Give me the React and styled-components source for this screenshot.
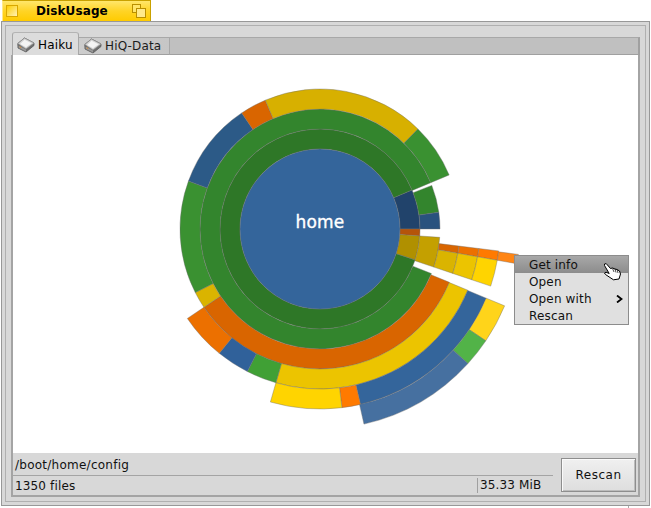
import React from "react";
import styled, { createGlobalStyle } from "styled-components";

const Global = createGlobalStyle`
  html, body { margin: 0; padding: 0; background: #fff; }
  body { font-family: "DejaVu Sans", sans-serif; font-size: 12px; color: #000; letter-spacing: 0.15px; }
`;

const Page = styled.div`
  width: 651px; height: 508px; background: #fff; overflow: hidden;
  display: flex; flex-direction: column;
`;
const TitleTab = styled.div`
  width: 149px; height: 21px; margin-left: 2px; box-sizing: border-box;
  display: flex; align-items: center; padding: 0 4px 0 3px;
  background: linear-gradient(#ffe66b, #ffd426 50%, #ffcb00);
  border: 1px solid #c9a100; border-bottom: 0; border-left-color: #ffe98a;
`;
const CloseBox = styled.span`
  width: 12px; height: 12px; box-sizing: border-box; display: block;
  border: 1px solid #d9a800; background: linear-gradient(135deg, #ffcf00, #fff2b8);
`;
const Title = styled.span`
  flex: 1; font-weight: bold; font-size: 12px; letter-spacing: 0.1px; padding-left: 18px;
`;
const ZoomBox = styled.svg`
  width: 14px; height: 14px; display: block;
`;
const Outer = styled.div`
  position: relative; margin: 0 1px; height: 485px; box-sizing: border-box; padding: 3px;
  background: #d8d8d8; border: 1px solid #989898;
  &::after {
    content: ""; position: absolute; right: 20px; bottom: -3px; width: 1px; height: 2px; background: #a8a8a8;
  }
`;
const Frame = styled.div`
  height: 100%; box-sizing: border-box; padding: 6px 5px 4px;
  border: 1px solid #b0b0b0; display: flex; flex-direction: column;
`;
const Strip = styled.div`
  height: 23px; display: flex; align-items: flex-end; flex: none;
`;
const ActiveTab = styled.div`
  width: 67px; height: 23px; margin-left: 1px; box-sizing: border-box; flex: none;
  display: flex; align-items: center; gap: 3px; padding: 1px 0 0 4px;
  background: #dcdcdc; border: 1px solid #a8a8a8; border-bottom: 0; border-radius: 3px 3px 0 0;
  border-top-color: #b4b4b4;
`;
const Tab = styled.div`
  width: 91px; height: 18px; box-sizing: border-box; flex: none;
  display: flex; align-items: center; gap: 3px; padding-left: 5px; color: #1c1c1c;
  background: linear-gradient(90deg, #cdcdcd, #c6c6c6);
  border-top: 1px solid #a8a8a8; border-right: 1px solid #a8a8a8; border-bottom: 1px solid #a0a0a0;
`;
const TabFiller = styled.div`
  flex: 1; height: 18px; box-sizing: border-box; background: #c0c0c0;
  border-top: 1px solid #a8a8a8; border-right: 2px solid #a0a0a0; border-bottom: 1px solid #a0a0a0;
`;
const DiskIcon = styled.svg`
  width: 18px; height: 16px; flex: none; display: block;
`;
const Body = styled.div`
  position: relative; height: 398px; flex: none; background: #fff;
  border-left: 2px solid #a4a4a4; border-right: 2px solid #a4a4a4;
`;
const Chart = styled.svg`
  display: block; width: 625px; height: 398px;
`;
const ChartLabel = styled.text`
  font-family: "DejaVu Sans", sans-serif; font-size: 17px; fill: #fff; stroke: #fff; stroke-width: 0.35px;
  text-anchor: middle;
`;
const Menu = styled.div`
  position: absolute; left: 501px; top: 200px; width: 115px; height: 70px; box-sizing: border-box;
  background: #e0e0e0; border: 1px solid #8c8c8c;
  display: flex; flex-direction: column;
`;
const MenuItem = styled.div`
  height: 17px; flex: none; display: flex; align-items: center; justify-content: space-between;
  padding: 0 5px 0 14px; color: #111;
  ${p => p.$active && "background: linear-gradient(#a8a8a8, #8c8c8c);"}
`;
const Chevron = styled.svg`
  width: 7px; height: 8px; display: block;
`;
const Hand = styled.svg`
  position: absolute; left: 590px; top: 208px; width: 19px; height: 18px;
`;
const Footer = styled.div`
  height: 42px; flex: none; display: flex; align-items: flex-start;
  border: 2px solid #a4a4a4; border-width: 0 2px 2px; background: #d8d8d8;
`;
const Status = styled.div`
  width: 540px; flex: none; display: flex; flex-direction: column;
`;
const PathRow = styled.div`
  display: flex; align-items: center; padding: 1px 0 0 2px; letter-spacing: 0.25px;
  height: 21px; border-bottom: 1px solid #a4a4a4; color: #111;
`;
const InfoRow = styled.div`
  height: 19px; display: flex; align-items: center; justify-content: space-between; color: #111;
  padding-left: 2px;
`;
const Size = styled.div`
  width: 76px; height: 15px; box-sizing: border-box; border-left: 1px solid #a0a0a0;
  padding-left: 2px; line-height: 15px;
`;
const Button = styled.button`
  width: 75px; height: 34px; margin: 5px 0 0 8px; flex: none; box-sizing: border-box; padding: 0;
  font: 12px "DejaVu Sans", sans-serif; color: #111; letter-spacing: 0.5px;
  border: 1px solid #8e8e8e; outline: 0;
  background: linear-gradient(#f0f0f0, #dedede);
  box-shadow: inset 1px 1px 0 #fafafa, inset -1px -1px 0 #bcbcbc;
`;

const CX = 307, CY = 174;
const pt = (r, a) => {
  const t = (a * Math.PI) / 180;
  return `${(CX + r * Math.cos(t)).toFixed(2)} ${(CY + r * Math.sin(t)).toFixed(2)}`;
};
const sector = (level, a0, a1) => {
  const r0 = 60 + level * 20, r1 = r0 + 20;
  const large = a1 - a0 > 180 ? 1 : 0;
  return `M${pt(r0, a0)} A${r0} ${r0} 0 ${large} 1 ${pt(r0, a1)} L${pt(r1, a1)} A${r1} ${r1} 0 ${large} 0 ${pt(r1, a0)} Z`;
};

const SEGMENTS = [
  [1, -23, 0, "#21436b"],
  [1, 0, 4, "#b5540a"],
  [1, 4, 18, "#b09000"],
  [1, 18, 337, "#2e7727"],
  [2, -21.3, -8, "#33852d"],
  [2, -8, 0, "#29527e"],
  [2, 4, 18.5, "#c4a000"],
  [2, 21.8, 337.3, "#33852d"],
  [3, 7, 10, "#d96500"],
  [3, 10, 18.5, "#dab400"],
  [3, 22.4, 146, "#d96500"],
  [3, 146, 153, "#dab400"],
  [3, 153, 200, "#3a9131"],
  [3, 200, 236, "#2c5a87"],
  [3, 236, 247, "#d96500"],
  [3, 247, 314.4, "#d7b000"],
  [3, 314.4, 337.3, "#3a9131"],
  [4, 7, 10, "#ec7000"],
  [4, 10, 18.5, "#ecc400"],
  [4, 22.5, 106, "#ecc400"],
  [4, 106, 117, "#40a035"],
  [4, 117, 129, "#30619a"],
  [4, 129, 146, "#ec7000"],
  [5, 7, 10, "#ff7a00"],
  [5, 10, 18.5, "#ffd400"],
  [5, 22.6, 77, "#34659b"],
  [5, 77, 83, "#ff7a00"],
  [5, 83, 106, "#ffd400"],
  [6, 7.3, 10, "#ff8514"],
  [6, 22.6, 34, "#ffd41a"],
  [6, 34, 42.3, "#52b348"],
  [6, 42.3, 77.3, "#4670a0"],
];

const Disk = () => (
  <DiskIcon viewBox="0 0 18 16">
    <path d="M0.8 6.5 L7.5 1 L17 6 L17 8.5 L9 15 L1 11 Z" fill="#6e6e6e" stroke="#5a5a5a" strokeWidth="0.8" strokeLinejoin="round" />
    <path d="M0.8 6.5 L7.5 1 L17 6 L9 12 Z" fill="#d4d4d4" stroke="#8c8c8c" strokeWidth="0.6" strokeLinejoin="round" />
    <path d="M7.5 2.8 L14.5 6.3 L9 10.3 L3.2 7 Z" fill="#f4f4f4" />
    <path d="M9 12.6 L9 14.6 L1.6 10.8 L1.6 8.4 Z" fill="#9a9a9a" />
    <path d="M2.6 9.8 L4.2 10.6" stroke="#e08a2c" strokeWidth="1" />
  </DiskIcon>
);

export default function App() {
  return (
    <Page>
      <Global />
      <TitleTab>
        <CloseBox />
        <Title>DiskUsage</Title>
        <ZoomBox viewBox="0 0 14 14">
          <rect x="0.5" y="0.5" width="8" height="8" fill="#ffe56a" stroke="#b98f00" />
          <rect x="4.5" y="4.5" width="9" height="9" fill="#ffe98a" stroke="#b98f00" />
        </ZoomBox>
      </TitleTab>
      <Outer>
        <Frame>
          <Strip>
            <ActiveTab><Disk />Haiku</ActiveTab>
            <Tab><Disk />HiQ-Data</Tab>
            <TabFiller />
          </Strip>
          <Body>
            <Chart viewBox="0 0 625 398">
              {SEGMENTS.map(([l, a0, a1, c]) => (
                <path key={`${l}-${a0}`} d={sector(l, a0, a1)} fill={c} stroke="#6f6f6f" strokeOpacity="0.4" strokeWidth="1" />
              ))}
              <circle cx={CX} cy={CY} r={80} fill="#34659b" stroke="#6f6f6f" strokeOpacity="0.4" />
              <ChartLabel x={CX} y={CY - 1}>home</ChartLabel>
            </Chart>
            <Menu>
              <MenuItem $active>Get info</MenuItem>
              <MenuItem>Open</MenuItem>
              <MenuItem>Open with
                <Chevron viewBox="0 0 7 8"><path d="M1 0.5 L5.5 4 L1 7.5" fill="none" stroke="#000" strokeWidth="1.8" /></Chevron>
              </MenuItem>
              <MenuItem>Rescan</MenuItem>
            </Menu>
            <Hand viewBox="0 0 19 18">
              <path d="M1.5 1 L3.2 .6 L7.5 5.5 L9.5 5 L12 6 L14 6.5 L16.5 8 L17.5 11 L16 16 L10.5 16.8 L7 14.5 L2.5 11.5 L1.5 10 L3 9.2 L6.2 10.5 L1.5 2.5 Z" fill="#fff" stroke="#000" strokeWidth="1" strokeLinejoin="round" />
              <path d="M9.5 5.5 L11 9 M12 6 L13 9.5 M14.2 6.8 L15 10" stroke="#000" strokeWidth="0.7" fill="none" />
            </Hand>
          </Body>
          <Footer>
            <Status>
              <PathRow>/boot/home/config</PathRow>
              <InfoRow>
                <span>1350 files</span>
                <Size>35.33 MiB</Size>
              </InfoRow>
            </Status>
            <Button>Rescan</Button>
          </Footer>
        </Frame>
      </Outer>
    </Page>
  );
}
